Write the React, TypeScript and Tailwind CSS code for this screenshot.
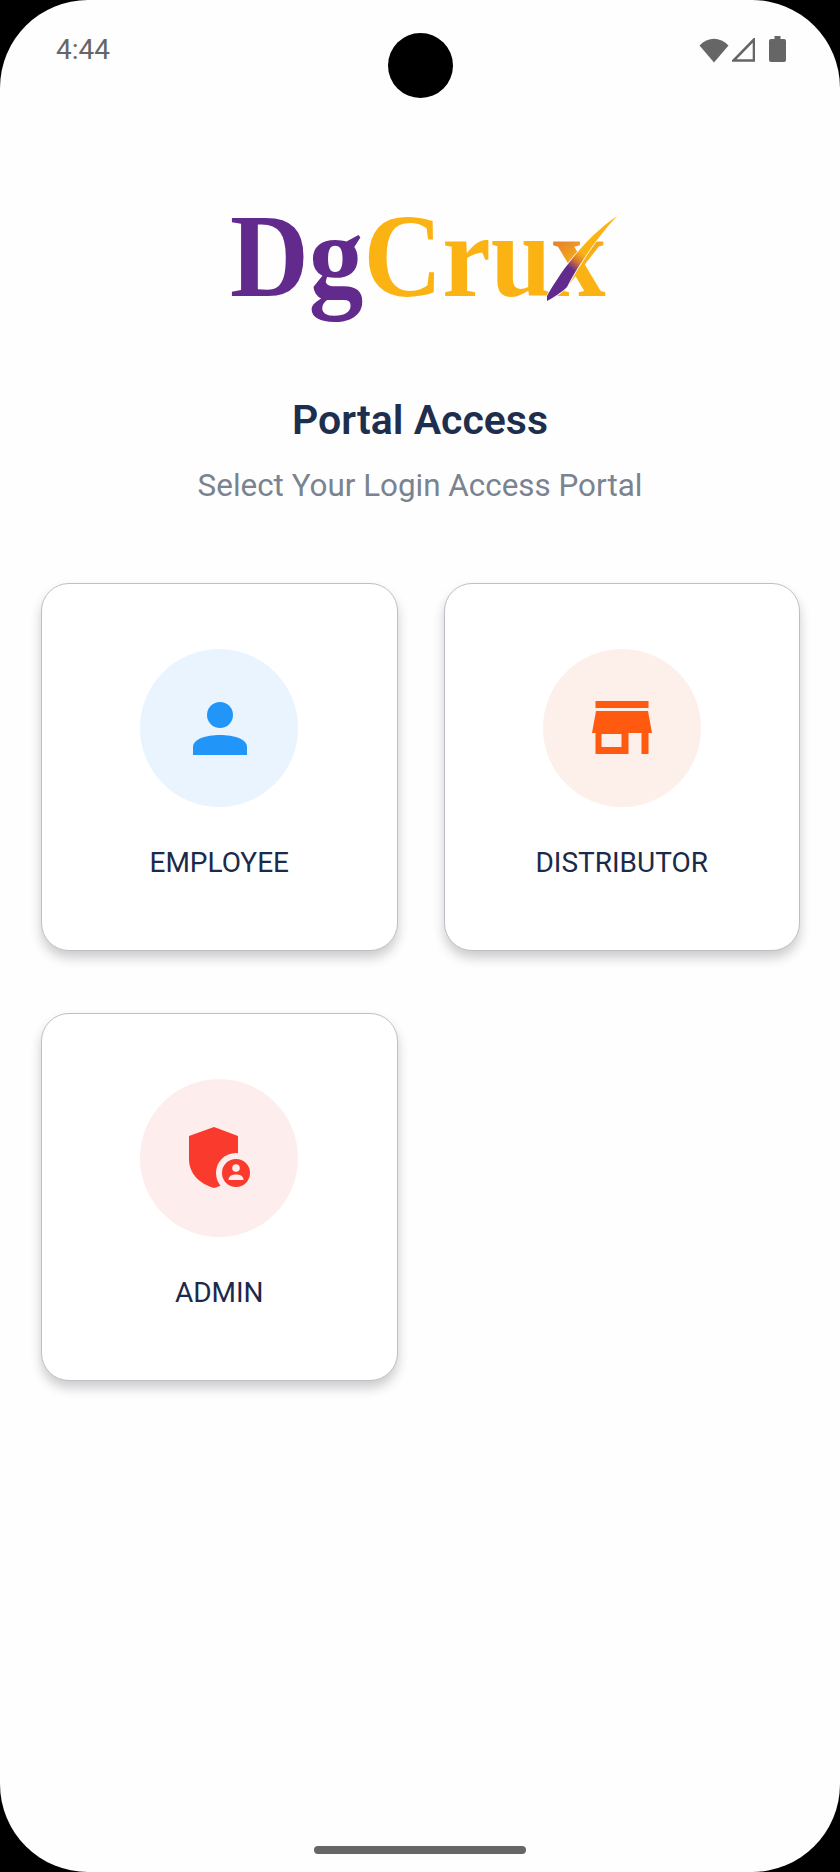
import React from 'react';

const WifiIcon = () => (
  <svg width="30" height="25" viewBox="0 0 30 25" className="text-[#666666]">
    <path d="M0.5 7.5 C9 -1.5 21 -1.5 29.5 7.5 L15 24.5 Z" fill="currentColor" />
  </svg>
);

const SignalIcon = () => (
  <svg width="23" height="24" viewBox="0 0 23 24" className="text-[#666666]">
    <path d="M22 1.5 V22.5 H1.5 Z" fill="none" stroke="currentColor" strokeWidth="2.6" />
  </svg>
);

const BatteryIcon = () => (
  <svg width="17" height="26" viewBox="0 0 17 26" className="text-[#666666]">
    <path d="M5.5 0 H11.5 V3 H15 A2 2 0 0 1 17 5 V24 A2 2 0 0 1 15 26 H2 A2 2 0 0 1 0 24 V5 A2 2 0 0 1 2 3 H5.5 Z" fill="currentColor" />
  </svg>
);

const PersonIcon = () => (
  <svg width="54" height="53" viewBox="0 0 54 53" className="ml-[1px]">
    <circle cx="27" cy="13" r="13" fill="#2196f8" />
    <path d="M0 53 V45 C0 37 13 33 27 33 C41 33 54 37 54 45 V53 Z" fill="#2196f8" />
  </svg>
);

const StoreIcon = () => (
  <svg width="60" height="54" viewBox="0 0 60 54">
    <path d="M3.5 0 H56.5 V7 H3.5 Z" fill="#ff5a10" />
    <path
      fillRule="evenodd"
      d="M4 10 H56 L60 32 H56.5 V53 H49.5 V32 H36.5 V53 H3.5 V32 H0 Z M9.5 33 V46 H29.5 V33 Z"
      fill="#ff5a10"
    />
  </svg>
);

const ShieldIcon = () => (
  <svg width="62" height="62" viewBox="-1 0 62 62">
    <path d="M25 0 L49 9 V32 C49 47 39 57 25 61 C11 57 0 47 0 32 V9 Z" fill="#f93a2d" />
    <circle cx="47" cy="46" r="20" fill="#fdeeed" />
    <circle cx="47" cy="46" r="14" fill="#f93a2d" />
    <circle cx="47" cy="41" r="3.8" fill="#fdeeed" />
    <path d="M39.5 53 C39.5 48.5 44 47.5 47 47.5 C50 47.5 54.5 48.5 54.5 53 Z" fill="#fdeeed" />
  </svg>
);

const Logo = () => (
  <div className="relative w-[373px] h-[110px] font-['Liberation_Serif',serif] font-bold text-[118px] leading-[110px] whitespace-nowrap">
    <div className="origin-left scale-x-[0.925]">
      <span className="text-[#622a8c]">Dg</span>
      <span className="text-[#fbb313]">Cru</span>
      <span className="bg-[linear-gradient(150deg,#e07c35_30%,#fbb313_55%)] bg-clip-text text-transparent">x</span>
    </div>
    <svg width="110" height="110" viewBox="0 0 110 110" className="absolute left-[290px] top-[-3px]">
      <defs>
        <linearGradient id="swoosh" x1="27" y1="102" x2="97" y2="17" gradientUnits="userSpaceOnUse">
          <stop offset="0.36" stopColor="#622a8c" />
          <stop offset="0.45" stopColor="#d9772f" />
          <stop offset="0.54" stopColor="#fbb313" />
        </linearGradient>
      </defs>
      <path
        d="M97 17 C78 30 62 47 52 60 C42 72 32 88 27 97 L27 102 C33 99 42 93 47 88 C52 78 58 68 65 58 C74 44 85 30 97 17 Z"
        fill="url(#swoosh)"
        stroke="#fefefe"
        strokeWidth="1.5"
        paintOrder="stroke"
      />
    </svg>
  </div>
);

const portals = [
  { label: 'EMPLOYEE', circle: 'bg-[#e9f4fe]', icon: <PersonIcon /> },
  { label: 'DISTRIBUTOR', circle: 'bg-[#fdefe9]', icon: <StoreIcon /> },
  { label: 'ADMIN', circle: 'bg-[#fdeeed]', icon: <ShieldIcon /> },
];

const PortalCard = ({ label, circle, icon }: { label: string; circle: string; icon: React.ReactNode }) => (
  <div className="h-[368px] rounded-[28px] border-[1.5px] border-[#bcc0c6] bg-white shadow-[0_7px_12px_rgba(0,0,0,0.2)] flex flex-col items-center pt-[65px]">
    <div className={`w-[158px] h-[158px] rounded-full flex items-center justify-center ${circle}`}>{icon}</div>
    <div className="mt-[41px] text-[28px] leading-[30px] text-[#1b2a4a]">{label}</div>
  </div>
);

export default function App() {
  return (
    <div className="w-[840px] h-[1872px] bg-black font-['Roboto',sans-serif]">
      <div className="relative w-full h-full bg-[#fefefe] rounded-[88px] overflow-hidden flex flex-col">
        {/* barra de status */}
        <div className="flex items-start justify-between pl-[56px] pr-[54px] pt-[35px] h-[100px]">
          <span className="text-[28px] leading-[30px] text-[#666666]">4:44</span>
          <div className="flex items-start gap-[3px] pt-[3px]">
            <WifiIcon />
            <SignalIcon />
            <div className="ml-[11px] -mt-[2px]">
              <BatteryIcon />
            </div>
          </div>
        </div>
        <div className="absolute left-[388px] top-[33px] w-[65px] h-[65px] rounded-full bg-black" />

        <div className="flex justify-center mt-[102px] pr-[7px]">
          <Logo />
        </div>

        <h1 className="mt-[85px] text-center text-[41px] leading-[46px] font-semibold text-[#1e2f4d]">Portal Access</h1>
        <p className="mt-[25px] text-center text-[31.4px] leading-[36px] text-[#7a8390]">Select Your Login Access Portal</p>

        <div className="mt-[79px] pl-[41px] pr-[40px] grid grid-cols-2 gap-x-[46px] gap-y-[62px]">
          {portals.map((p) => (
            <PortalCard key={p.label} label={p.label} circle={p.circle} icon={p.icon} />
          ))}
        </div>

        {/* barra inferior */}
        <div className="absolute left-[314px] top-[1846px] w-[212px] h-[8px] rounded-full bg-[#666666]" />
      </div>
    </div>
  );
}
